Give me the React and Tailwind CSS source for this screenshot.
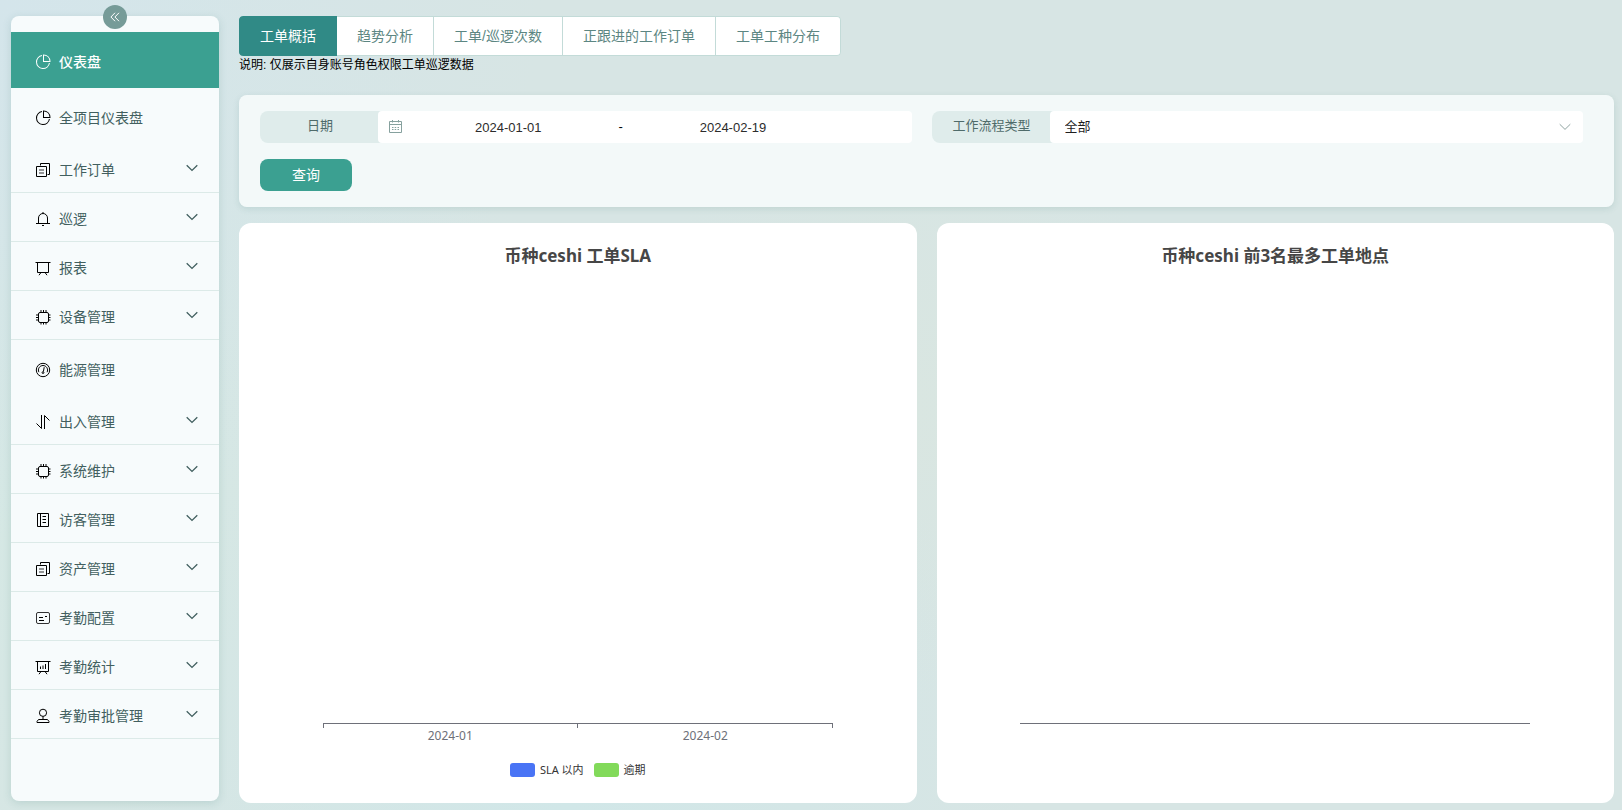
import React from "react";

const icons = {
  pie: (
    <g fill="currentColor" stroke="none" transform="scale(0.015625)">
      <path d="M448 68.48v64.832A384.128 384.128 0 0 0 512 896a384.128 384.128 0 0 0 378.688-320h64.768A448.128 448.128 0 0 1 64 512 448.128 448.128 0 0 1 448 68.48z" />
      <path d="M576 97.28V448h350.72A384.064 384.064 0 0 0 576 97.28zM512 64V33.152A448 448 0 0 1 990.848 512H512V64z" />
    </g>
  ),
  copy: (
    <>
      <path d="M1.5 4.5h10v10h-10z" />
      <path d="M5.5 3.5v-2h9v11h-2" />
      <path d="M4 8h5M4 11h5" strokeOpacity="0.8" />
    </>
  ),
  bell: (
    <path d="M1 12.5h14M3.5 12.5V7a4.5 4.5 0 0 1 9 0v5.5M8 1v1.5M7 14.5h2" />
  ),
  board: (
    <path d="M.5 2.5h15M2.5 2.5v10h11v-10M6 12.5l-2 2.7M10 12.5l2 2.7" />
  ),
  cpu: (
    <>
      <rect x="3.5" y="3.5" width="10" height="10" rx="1.5" />
      <path d="M6 1v2.5M8.5 1v2.5M11 1v2.5M6 13.5v2M8.5 13.5v2M11 13.5v2M1 6h2.5M1 8.5h2.5M1 11h2.5M13.5 6h2M13.5 8.5h2M13.5 11h2" />
    </>
  ),
  odometer: (
    <>
      <circle cx="8" cy="8" r="6.7" />
      <path d="M3.9 10.2A4.6 4.6 0 1 1 12.1 10.2" />
      <path d="M9.2 5.2 8.4 9.6" />
      <circle cx="8" cy="10.6" r="0.9" />
    </>
  ),
  sort: <path d="M1.5 9.5l5 5V1M9.5 15V1.5l5 5" />,
  notebook: (
    <path d="M2.5 1.5h11v13h-11zM5.5 1.5v13M7.5 4.5H11M7.5 7.5H11M7.5 10.5H11" />
  ),
  postcard: (
    <>
      <rect x="1.5" y="2.5" width="13" height="11" rx="1.5" strokeOpacity="0.8" />
      <path d="M4 7.5h4M4 10.5h5M10 6.5h2" />
    </>
  ),
  analysis: (
    <>
      <path d="M.5 2.5h15M2.5 2.5v10h11v-10M6 12.5l-2 2.7M10 12.5l2 2.7" />
      <path d="M5.5 7.5v2.5M8 6.5V10M10.5 5v5" />
    </>
  ),
  stamp: (
    <>
      <circle cx="8" cy="4.8" r="3.6" />
      <path d="M8 8.4v3.1M3.5 11.5h9l1.5 2v1H2v-1z" />
    </>
  ),
};

function Icon({ name }) {
  return (
    <svg viewBox="0 0 16 16" className="size-4 shrink-0" fill="none" stroke="currentColor" strokeWidth="1" aria-hidden="true">
      {icons[name]}
    </svg>
  );
}

function Chevron({ className }) {
  return (
    <svg viewBox="0 0 12 8" className={className} fill="none" stroke="currentColor" aria-hidden="true">
      <path d="M.7 1.2 6 6.4l5.3-5.2" />
    </svg>
  );
}

const menu = [
  { label: "仪表盘", icon: "pie", active: true },
  { label: "全项目仪表盘", icon: "pie" },
  { label: "工作订单", icon: "copy", sub: true },
  { label: "巡逻", icon: "bell", sub: true },
  { label: "报表", icon: "board", sub: true },
  { label: "设备管理", icon: "cpu", sub: true },
  { label: "能源管理", icon: "odometer" },
  { label: "出入管理", icon: "sort", sub: true },
  { label: "系统维护", icon: "cpu", sub: true },
  { label: "访客管理", icon: "notebook", sub: true },
  { label: "资产管理", icon: "copy", sub: true },
  { label: "考勤配置", icon: "postcard", sub: true },
  { label: "考勤统计", icon: "analysis", sub: true },
  { label: "考勤审批管理", icon: "stamp", sub: true },
];

function MenuItem({ item }) {
  if (item.sub) {
    return (
      <li>
        <button
          type="button"
          aria-expanded="false"
          className="flex h-[49px] w-full items-center gap-2 border-b border-[#dceae8] pt-1 pr-[21px] pl-6 text-left text-[#425f5f]"
        >
          <span className="text-black">
            <Icon name={item.icon} />
          </span>
          <span className="flex-1">{item.label}</span>
          <Chevron className="mb-1 h-2 w-3 stroke-[1.3]" />
        </button>
      </li>
    );
  }
  return (
    <li>
      <a
        href="#"
        aria-current={item.active ? "page" : undefined}
        className={
          item.active
            ? "flex h-14 items-center gap-2 bg-[#3ba091] pt-1 pl-6 font-medium text-white"
            : "flex h-14 items-center gap-2 pt-1 pl-6 text-[#425f5f]"
        }
      >
        <span className={item.active ? "text-white" : "text-black"}>
          <Icon name={item.icon} />
        </span>
        {item.label}
      </a>
    </li>
  );
}

function Sidebar() {
  return (
    <aside className="relative mt-4 mb-[9px] w-[208px] shrink-0 rounded-lg bg-[#f7fbfc] pt-4 shadow-[0_2px_8px_rgba(60,120,115,0.18)]">
      <button
        type="button"
        aria-label="收起菜单"
        className="absolute -top-[11px] left-1/2 flex size-6 -translate-x-1/2 items-center justify-center rounded-full bg-[#769b98] text-white"
      >
        <svg viewBox="0 0 10 10" className="size-2.5" fill="none" stroke="currentColor" aria-hidden="true">
          <path d="M5 .8.9 5 5 9.2M9 .8 4.9 5 9 9.2" />
        </svg>
      </button>
      <nav>
        <ul className="text-sm">
          {menu.map((item) => (
            <MenuItem key={item.label} item={item} />
          ))}
        </ul>
      </nav>
    </aside>
  );
}

const tabs = ["工单概括", "趋势分析", "工单/巡逻次数", "正跟进的工作订单", "工单工种分布"];

function Tabs() {
  return (
    <div role="tablist" className="flex h-10 w-fit overflow-hidden rounded text-sm">
      {tabs.map((t, i) => (
        <button
          key={t}
          type="button"
          role="tab"
          aria-selected={i === 0}
          className={
            i === 0
              ? "rounded-l border-x border-[#308a86] bg-[#308a86] px-5 text-white"
              : "border-y border-r border-[#c3dbd8] bg-white px-5 text-[#5c8682] last:rounded-r"
          }
        >
          {t}
        </button>
      ))}
    </div>
  );
}

const labelClass =
  "-mr-1 flex h-8 w-[122px] shrink-0 items-center justify-center rounded-l-lg bg-[#dfeceb] pr-0.5 pb-0.5 text-[#4f6b6a]";

function Filters() {
  return (
    <form
      onSubmit={(e) => e.preventDefault()}
      className="mt-5 rounded-lg bg-[#f6fbfb]/90 py-4 pr-[31px] pl-[21px] shadow-[0_2px_6px_rgba(60,120,115,0.15)]"
    >
      <div className="grid grid-cols-2 gap-5 text-[13px]">
        <div className="flex">
          <label htmlFor="start" className={labelClass}>
            日期
          </label>
          <div className="flex h-8 min-w-0 flex-1 items-center rounded bg-white pl-[11px]">
            <svg viewBox="0 0 14 14" className="mr-1.5 size-[14px] shrink-0 text-[#86a19e]" fill="none" stroke="currentColor" aria-hidden="true">
              <path d="M.5 1.5h12v11H.5zM.5 4.5h12M3.5 0v2.5M9.5 0v2.5" />
              <path d="M3 7.5h1.5M5.7 7.5h1.5M8.5 7.5H10M3 9.5h1.5M5.7 9.5h1.5M8.5 9.5H10" />
            </svg>
            <input
              id="start"
              type="text"
              defaultValue="2024-01-01"
              className="h-full w-[38%] bg-transparent text-center text-[#2c2c2c] outline-none"
            />
            <span className="w-[5%] text-center text-black">-</span>
            <input
              type="text"
              aria-label="结束日期"
              defaultValue="2024-02-19"
              className="h-full w-[38%] bg-transparent text-center text-[#2c2c2c] outline-none"
            />
          </div>
        </div>
        <div className="flex">
          <label htmlFor="flow" className={labelClass}>
            工作流程类型
          </label>
          <div className="relative min-w-0 flex-1">
            <select
              id="flow"
              className="block h-8 w-full appearance-none rounded bg-white pr-8 pl-[15px] text-[#1f1f1f] outline-none"
            >
              <option>全部</option>
            </select>
            <Chevron className="pointer-events-none absolute top-3 right-3 h-2 w-3 text-[#8fa3a1]" />
          </div>
        </div>
      </div>
      <button type="submit" className="mt-4 block h-8 w-[92px] rounded-lg bg-[#3ba091] text-sm text-white">
        查询
      </button>
    </form>
  );
}

const chartFont = "font-['Noto_Sans','Noto_Sans_CJK_SC',sans-serif]";

function ChartCard({ title, months, legend }) {
  return (
    <section className={"flex flex-1 flex-col rounded-xl bg-white px-5 pt-5 pb-[26px] " + chartFont}>
      <h2 className="text-center text-[17px] leading-[26px] font-bold text-[#464646]">{title}</h2>
      <div className="flex-1" />
      <div className="mx-[10%] border-t border-[#6e7079]">
        <div className={months ? "flex h-1 border-x border-[#6e7079]" : "h-1"}>
          {months && <div className="w-1/2 border-r border-[#6e7079]" />}
        </div>
        <div className="flex h-4 text-xs leading-4 text-[#6e7079]">
          {months &&
            months.map((m) => (
              <span key={m} className="flex-1 text-center">
                {m}
              </span>
            ))}
        </div>
      </div>
      <ul className="mt-[19px] flex h-[14px] items-center justify-center gap-2.5 text-[11px] leading-[14px] text-[#333]">
        {legend &&
          legend.map((l) => (
            <li key={l.name} className="flex items-center gap-[5px]">
              <span className={"h-[14px] w-[25px] rounded-[3px] " + l.color} />
              {l.name}
            </li>
          ))}
      </ul>
    </section>
  );
}

export default function App() {
  return (
    <div className="flex min-h-screen gap-5 bg-[#d7e5e4] bg-[radial-gradient(circle_at_0%_0%,#d4e5eb_0%,transparent_30%),radial-gradient(circle_at_35%_100%,#d1e7e8_0%,transparent_35%),radial-gradient(circle_at_0%_60%,#d5e8e4_0%,transparent_35%),radial-gradient(circle_at_56%_50%,#d9e6e1_0%,transparent_30%)] pr-2 pl-[11px] font-['Liberation_Sans','Noto_Sans_CJK_SC',sans-serif]">
      <Sidebar />
      <main className="flex min-w-0 flex-1 flex-col pt-4 pb-[7px]">
        <Tabs />
        <p className="text-xs leading-[19px] text-black">说明: 仅展示自身账号角色权限工单巡逻数据</p>
        <Filters />
        <div className="mt-4 flex flex-1 gap-5">
          <ChartCard
            title="币种ceshi 工单SLA"
            months={["2024-01", "2024-02"]}
            legend={[
              { name: "SLA 以内", color: "bg-[#4974f5]" },
              { name: "逾期", color: "bg-[#82da5a]" },
            ]}
          />
          <ChartCard title="币种ceshi 前3名最多工单地点" />
        </div>
      </main>
    </div>
  );
}
